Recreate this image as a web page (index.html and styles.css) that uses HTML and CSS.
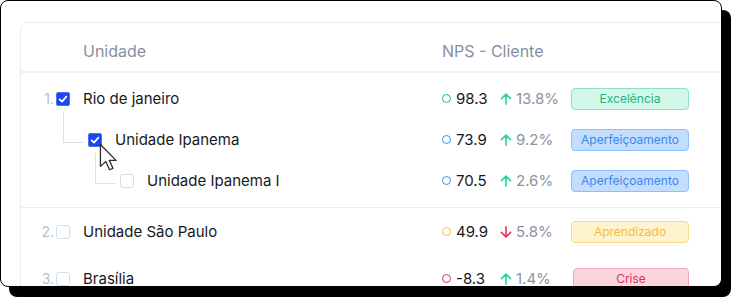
FILE: index.html
```html
<!DOCTYPE html>
<html lang="pt-BR">
<head>
<meta charset="utf-8">
<title>NPS</title>
<link rel="stylesheet" href="styles.css">
</head>
<body>
<div class="frame">
  <div class="card">
    <div class="thead">
      <div class="th th-unit">Unidade</div>
      <div class="th">NPS - Cliente</div>
    </div>

    <div class="group group-first">
      <div class="row">
        <div class="unit">
          <span class="num">1.</span>
          <span class="cb checked"><svg viewBox="0 0 14 14" width="14" height="14"><polyline points="3.6,7.4 6,9.6 10.4,4.6" /></svg></span>
          <span class="name">Rio de janeiro</span>
        </div>
        <div class="nps">
          <span class="dot c-green"></span><span class="score">98.3</span>
          <svg class="arrow a-up" viewBox="0 0 12 12" width="12" height="12"><path d="M6 11.2V1.2M1.4 5.6L6 1.2L10.6 5.6"/></svg>
          <span class="pct">13.8%</span>
          <span class="badge b-green">Excelência</span>
        </div>
      </div>
      <div class="row lvl1">
        <div class="unit">
          <span class="cb checked child"><svg viewBox="0 0 14 14" width="14" height="14"><polyline points="3.6,7.4 6,9.6 10.4,4.6" /></svg></span>
          <span class="name">Unidade Ipanema</span>
        </div>
        <div class="nps">
          <span class="dot c-blue"></span><span class="score">73.9</span>
          <svg class="arrow a-up" viewBox="0 0 12 12" width="12" height="12"><path d="M6 11.2V1.2M1.4 5.6L6 1.2L10.6 5.6"/></svg>
          <span class="pct">9.2%</span>
          <span class="badge b-blue">Aperfeiçoamento</span>
        </div>
      </div>
      <div class="row lvl2">
        <div class="unit">
          <span class="cb child"></span>
          <span class="name">Unidade Ipanema I</span>
        </div>
        <div class="nps">
          <span class="dot c-blue"></span><span class="score">70.5</span>
          <svg class="arrow a-up" viewBox="0 0 12 12" width="12" height="12"><path d="M6 11.2V1.2M1.4 5.6L6 1.2L10.6 5.6"/></svg>
          <span class="pct">2.6%</span>
          <span class="badge b-blue">Aperfeiçoamento</span>
        </div>
      </div>
    </div>

    <div class="group">
      <div class="row row-tall">
        <div class="unit">
          <span class="num">2.</span>
          <span class="cb"></span>
          <span class="name">Unidade São Paulo</span>
        </div>
        <div class="nps">
          <span class="dot c-yellow"></span><span class="score">49.9</span>
          <svg class="arrow a-down" viewBox="0 0 12 12" width="12" height="12"><path d="M6 0.8V10.8M1.4 6.4L6 10.8L10.6 6.4"/></svg>
          <span class="pct">5.8%</span>
          <span class="badge b-yellow">Aprendizado</span>
        </div>
      </div>
      <div class="row row-tall">
        <div class="unit">
          <span class="num">3.</span>
          <span class="cb"></span>
          <span class="name">Brasília</span>
        </div>
        <div class="nps">
          <span class="dot c-pink"></span><span class="score">-8.3</span>
          <svg class="arrow a-up" viewBox="0 0 12 12" width="12" height="12"><path d="M6 11.2V1.2M1.4 5.6L6 1.2L10.6 5.6"/></svg>
          <span class="pct">1.4%</span>
          <span class="badge b-pink b-narrow">Crise</span>
        </div>
      </div>
    </div>
  </div>

  <svg class="cursor" viewBox="0 0 13 20" width="18.5" height="28.5">
    <path d="M1 1 L1 16.4 L4.8 13 L7.4 18.8 L9.8 17.8 L7.3 12.2 L12 12.2 Z"/>
  </svg>
</div>
</body>
</html>
```

FILE: styles.css
```css
* { box-sizing: border-box; }

html, body {
  margin: 0;
  padding: 0;
  background: #ffffff;
}

body {
  font-family: Inter, "Noto Sans", "Liberation Sans", sans-serif;
  color: #17181c;
  width: 731px;
  height: 298px;
  overflow: hidden;
}

.frame {
  position: relative;
  width: 722px;
  height: 287px;
  border: 1px solid #000;
  border-radius: 8px;
  background: #fff;
  box-shadow: 9px 10px 0 #000;
  overflow: hidden;
  padding: 21px 0 0 19px;
}

.card {
  width: 760px;
  height: 320px;
  border: 1px solid #e7ebf2;
  border-radius: 8px;
}

.thead {
  display: grid;
  grid-template-columns: 421px 1fr;
  height: 50px;
  padding-top: 7px;
  border-bottom: 2px solid #edf0f6;
  align-items: center;
  font-size: 16px;
  color: #8590a4;
}

.th-unit { padding-left: 62px; }

.group-first {
  padding: 5px 0 6px;
  border-bottom: 1px solid #e9edf3;
}

.row {
  display: grid;
  grid-template-columns: 421px 1fr;
  height: 41px;
  align-items: center;
}

.row-tall { height: 47px; }

.unit {
  display: flex;
  align-items: center;
  font-size: 15px;
}

.lvl1 .unit { padding-left: 67px; }
.lvl2 .unit { padding-left: 99px; }

.num {
  width: 33px;
  text-align: right;
  font-size: 14px;
  color: #b7bfcd;
}

.cb {
  position: relative;
  width: 14px;
  height: 14px;
  margin-left: 2px;
  border: 1.5px solid #d5deec;
  border-radius: 3px;
  background: #fff;
  flex: none;
}

.lvl1 .cb, .lvl2 .cb { margin-left: 0; }

.cb.checked {
  background: #1c47ee;
  border: 1px solid #4a6ff2;
  border-radius: 2px;
}

.cb svg {
  position: absolute;
  left: -1px;
  top: -1px;
  fill: none;
  stroke: #fff;
  stroke-width: 1.7;
  stroke-linecap: round;
  stroke-linejoin: round;
}

.cb.child::before {
  content: "";
  position: absolute;
  left: -26px;
  top: -22px;
  width: 20px;
  height: 30px;
  border-left: 1.5px solid #d9e0ea;
  border-bottom: 1.5px solid #d9e0ea;
}

.name { margin-left: 13px; white-space: nowrap; }

.nps {
  display: flex;
  align-items: center;
  font-size: 15px;
}

.dot {
  width: 9px;
  height: 9px;
  border: 1.5px solid;
  border-radius: 50%;
  flex: none;
}

.c-green { border-color: #14c38e; }
.c-blue { border-color: #3d8bf5; }
.c-yellow { border-color: #f6bd3f; }
.c-pink { border-color: #e6285b; }

.score {
  width: 44px;
  margin-left: 5px;
  color: #17181c;
}

.arrow {
  flex: none;
  fill: none;
  stroke-width: 1.6;
  stroke-linecap: round;
  stroke-linejoin: round;
}

.a-up { stroke: #2fd197; }
.a-down { stroke: #ef3058; }

.pct {
  width: 55px;
  margin-left: 4px;
  color: #8a92a4;
}

.badge {
  width: 118px;
  height: 22px;
  border: 1px solid;
  border-radius: 4px;
  display: flex;
  align-items: center;
  justify-content: center;
  font-size: 12px;
  padding-bottom: 1px;
}

.b-narrow { width: 116px; margin-left: 2px; }

.b-green { background: #d3f7e8; border-color: #8ae4be; color: #22b47f; }
.b-blue { background: #c2ddfe; border-color: #8fc0fa; color: #3e87ef; }
.b-yellow { background: #fef3cc; border-color: #fbdb80; color: #f3bd40; }
.b-pink { background: #fad5dc; border-color: #f4a9b9; color: #e0325c; }

.cursor {
  position: absolute;
  left: 98px;
  top: 142px;
}

.cursor path {
  fill: #fff;
  stroke: #2a2a2a;
  stroke-width: 0.9;
  stroke-linejoin: round;
}
```
